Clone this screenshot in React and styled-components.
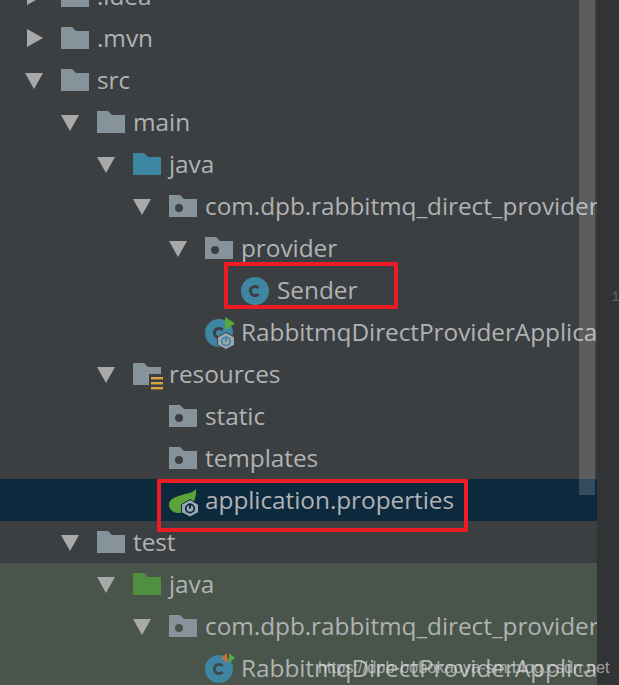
import React from 'react';
import styled, { createGlobalStyle } from 'styled-components';

const Global = createGlobalStyle`
  html, body { margin: 0; padding: 0; background: #323334; }
  #root { width: 619px; height: 685px; overflow: hidden; }
`;
const Window = styled.div`
  position: relative;
  width: 619px;
  height: 685px;
  overflow: hidden;
  display: flex;
  background: #323334;
  font-family: "Open Sans", "Noto Sans", sans-serif;
`;
const Tree = styled.div`
  width: 597px;
  flex: none;
  height: 685px;
  overflow: hidden;
  background: #3c3f41;
`;
const TreeList = styled.div`
  margin-top: -25px;
  display: flex;
  flex-direction: column;
`;
const Row = styled.div`
  height: 42px;
  display: flex;
  align-items: center;
  padding-left: ${p => p.$indent * 36 + 25}px;
  background: ${p => (p.$selected ? '#0d293e' : p.$test ? '#49544a' : 'transparent')};
  white-space: nowrap;
  overflow: hidden;
`;
const Arrow = styled.svg`
  width: 20px;
  height: 20px;
  flex: none;
  margin-left: -1px;
  margin-right: 16px;
  visibility: ${p => (p.$hidden ? 'hidden' : 'visible')};
`;
const IconSlot = styled.span`
  width: 30px;
  height: 30px;
  flex: none;
  display: flex;
  align-items: center;
  justify-content: center;
  margin-right: 7px;
  svg { display: block; overflow: visible; flex: none; }
`;
const Label = styled.span`
  font-size: 24.4px;
  line-height: 30px;
  letter-spacing: -0.05px;
  color: #b0b2b4;
`;
const Scrollbar = styled.div`
  position: absolute;
  left: 579px;
  top: 0;
  width: 16px;
  height: 495px;
  background: rgba(255, 255, 255, 0.16);
`;
const LineNo = styled.span`
  position: absolute;
  left: 611px;
  top: 288px;
  font-family: "Liberation Mono", monospace;
  font-size: 15px;
  line-height: 20px;
  color: #5e6060;
`;
const Callout = styled.div`
  position: absolute;
  left: ${p => p.$x}px;
  top: ${p => p.$y}px;
  width: ${p => p.$w}px;
  height: ${p => p.$h}px;
  box-sizing: border-box;
  border: 4px solid #ed1c24;
  border-radius: 1px;
`;
const Watermark = styled.span`
  position: absolute;
  left: 318px;
  top: 657px;
  font-family: "Liberation Sans", Arial, sans-serif;
  font-size: 16.4px;
  line-height: 20px;
  color: rgba(225, 225, 225, 0.62);
  white-space: nowrap;
`;
const ResourceIcon = styled.svg`
  margin-top: 6px;
  margin-left: 2px;
`;

const Triangle = ({ open }) => (
  <Arrow viewBox="0 0 20 20">
    {open ? <path d="M1 3 H19 L10 19 Z" fill="#a9a9a9" /> : <path d="M3 1 L19 10 L3 19 Z" fill="#a9a9a9" />}
  </Arrow>
);

const Folder = ({ fill = '#87939a', dot, bg = '#3c3f41' }) => (
  <svg width="28" height="22" viewBox="0 0 28 22">
    <path d="M0 0 H11 L15 4 H28 V22 H0 Z" fill={fill} />
    {dot && <circle cx="10" cy="13" r="4" fill={bg} />}
  </svg>
);

const ResourceFolder = () => (
  <ResourceIcon width="30" height="28" viewBox="0 0 30 28">
    <path d="M0 0 H11 L15 4 H28 V22 H0 Z" fill="#87939a" />
    <rect x="16" y="11" width="14" height="17" fill="#3c3f41" />
    <g fill="#d9a343">
      <rect x="18" y="14" width="12" height="2.4" />
      <rect x="18" y="19" width="12" height="2.4" />
      <rect x="18" y="24" width="12" height="2.4" />
    </g>
  </ResourceIcon>
);

const ClassCircle = ({ children, letter = '#3c3f41' }) => (
  <svg width="30" height="30" viewBox="0 0 30 30">
    <circle cx="15" cy="16" r="14" fill="#3f86a3" />
    <path d="M18.5 13 A4.6 4.6 0 1 0 18.5 19" fill="none" stroke={letter} strokeWidth="3" />
    {children}
  </svg>
);

const SpringApp = () => (
  <ClassCircle>
    <path d="M21 0 L31 6.5 L21 13 Z" fill="#59a83a" />
    <path d="M22 15.5 L30.5 20 V28 L22 32.5 L13.5 28 V20 Z" fill="#9aa7b0" stroke="#3c3f41" strokeWidth="1" />
    <circle cx="22" cy="24.5" r="4.2" fill="none" stroke="#3f86a3" strokeWidth="1.8" />
    <rect x="21" y="19.5" width="2" height="5" fill="#3f86a3" />
  </ClassCircle>
);

const TestApp = () => (
  <ClassCircle letter="#3b4a4c">
    <path d="M23 0 L17.5 5 L23 10 Z" fill="#e0652a" />
    <path d="M25 0 L31 5 L25 10 Z" fill="#59a83a" />
  </ClassCircle>
);

const SpringLeaf = () => (
  <svg width="30" height="30" viewBox="0 0 30 30">
    <path d="M28 4 C25 8 20 8 14 10 C7 12 1 14 1 20 C1 24 5 28 10 28 C18 28 29 20 28 4 Z" fill="#5aa43a" />
    <path d="M22 14.5 L30.5 19.5 V27.5 L22 32 L13.5 27.5 V19.5 Z" fill="#9aa7b0" stroke="#0d293e" strokeWidth="1" />
    <circle cx="22" cy="23.5" r="4.2" fill="none" stroke="#0d293e" strokeWidth="1.8" />
    <rect x="21" y="18.5" width="2" height="5" fill="#0d293e" />
  </svg>
);

const rows = [
  { i: 0, arrow: 'closed', icon: <Folder />, text: '.idea' },
  { i: 0, arrow: 'closed', icon: <Folder />, text: '.mvn' },
  { i: 0, arrow: 'open', icon: <Folder />, text: 'src' },
  { i: 1, arrow: 'open', icon: <Folder />, text: 'main' },
  { i: 2, arrow: 'open', icon: <Folder fill="#3b86a3" />, text: 'java' },
  { i: 3, arrow: 'open', icon: <Folder dot />, text: 'com.dpb.rabbitmq_direct_provider' },
  { i: 4, arrow: 'open', icon: <Folder dot />, text: 'provider' },
  { i: 5, icon: <ClassCircle />, text: 'Sender' },
  { i: 4, icon: <SpringApp />, text: 'RabbitmqDirectProviderApplication' },
  { i: 2, arrow: 'open', icon: <ResourceFolder />, text: 'resources' },
  { i: 3, icon: <Folder dot />, text: 'static' },
  { i: 3, icon: <Folder dot />, text: 'templates' },
  { i: 3, icon: <SpringLeaf />, text: 'application.properties', selected: true },
  { i: 1, arrow: 'open', icon: <Folder />, text: 'test' },
  { i: 2, arrow: 'open', icon: <Folder fill="#4f8f3f" />, text: 'java', test: true },
  { i: 3, arrow: 'open', icon: <Folder dot bg="#49544a" />, text: 'com.dpb.rabbitmq_direct_provider', test: true },
  { i: 4, icon: <TestApp />, text: 'RabbitmqDirectProviderApplicationTests', test: true },
];

export default function App() {
  return (
    <Window>
      <Global />
      <Tree>
        <TreeList>
          {rows.map((r, idx) => (
            <Row key={idx} $indent={r.i} $selected={r.selected} $test={r.test}>
              {r.arrow ? <Triangle open={r.arrow === 'open'} /> : <Arrow $hidden />}
              <IconSlot>{r.icon}</IconSlot>
              <Label>{r.text}</Label>
            </Row>
          ))}
        </TreeList>
      </Tree>
      <Scrollbar />
      <LineNo>1</LineNo>
      <Callout $x={224} $y={262} $w={174} $h={47} />
      <Callout $x={157} $y={479} $w={311} $h={53} />
      <Watermark>https://dpb-bobokaoya-sm.blog.csdn.net</Watermark>
    </Window>
  );
}
